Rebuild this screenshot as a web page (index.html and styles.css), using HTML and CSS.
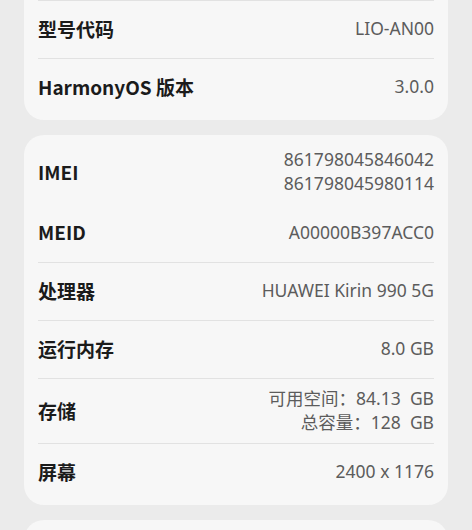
FILE: index.html
```html
<!DOCTYPE html>
<html lang="zh-CN">
<head>
<meta charset="utf-8">
<title>关于手机</title>
<link rel="stylesheet" href="styles.css">
</head>
<body>
<div class="page">
  <section class="card card-first">
    <div class="row">
      <span class="label">型号代码</span>
      <span class="value">LIO-AN00</span>
    </div>
    <div class="row">
      <span class="label">HarmonyOS 版本</span>
      <span class="value">3.0.0</span>
    </div>
  </section>

  <section class="card">
    <div class="row row-tall">
      <span class="label">IMEI</span>
      <span class="value multi"><span>861798045846042</span><span>861798045980114</span></span>
    </div>
    <div class="row row-nodiv">
      <span class="label">MEID</span>
      <span class="value">A00000B397ACC0</span>
    </div>
    <div class="row">
      <span class="label">处理器</span>
      <span class="value">HUAWEI Kirin 990 5G</span>
    </div>
    <div class="row">
      <span class="label">运行内存</span>
      <span class="value">8.0 GB</span>
    </div>
    <div class="row row-tall">
      <span class="label">存储</span>
      <span class="value multi"><span>可用空间：84.13&nbsp; GB</span><span>总容量：128&nbsp; GB</span></span>
    </div>
    <div class="row">
      <span class="label">屏幕</span>
      <span class="value">2400 x 1176</span>
    </div>
  </section>

  <section class="card card-next"></section>
</div>
</body>
</html>
```

FILE: styles.css
```css
* { box-sizing: border-box; }

html, body {
  margin: 0;
  padding: 0;
  background: #ebebeb;
  overflow: hidden;
}

body {
  font-family: "Noto Sans CJK SC", "Noto Sans", sans-serif;
  -webkit-font-smoothing: antialiased;
}

.page {
  display: flex;
  flex-direction: column;
  gap: 15px;
  padding: 0 24px;
}

.card {
  background: #f7f7f7;
  border-radius: 20px;
  padding: 5px 14px 4px;
  display: flex;
  flex-direction: column;
}

.card-first {
  margin-top: -30px;
  padding-top: 30px;
}

.row {
  display: flex;
  align-items: center;
  justify-content: space-between;
  min-height: 58px;
  padding-bottom: 3px;
  border-top: 1px solid #e2e2e2;
}

.card > .row:first-child,
.row-nodiv {
  border-top: none;
}

.card-first > .row:first-child {
  border-top: 1px solid #e2e2e2;
}

.row-tall {
  min-height: 64px;
  padding: 7px 0 9px;
}

.label {
  font-size: 19px;
  font-weight: 700;
  color: #1b1b1b;
  white-space: nowrap;
}

.value {
  font-family: "Noto Sans", "Noto Sans CJK SC", sans-serif;
  font-size: 17.5px;
  color: #5c5c5c;
  text-align: right;
  white-space: nowrap;
}

.multi {
  display: flex;
  flex-direction: column;
  align-items: flex-end;
  line-height: 24px;
}

.card-next {
  min-height: 60px;
}
```
